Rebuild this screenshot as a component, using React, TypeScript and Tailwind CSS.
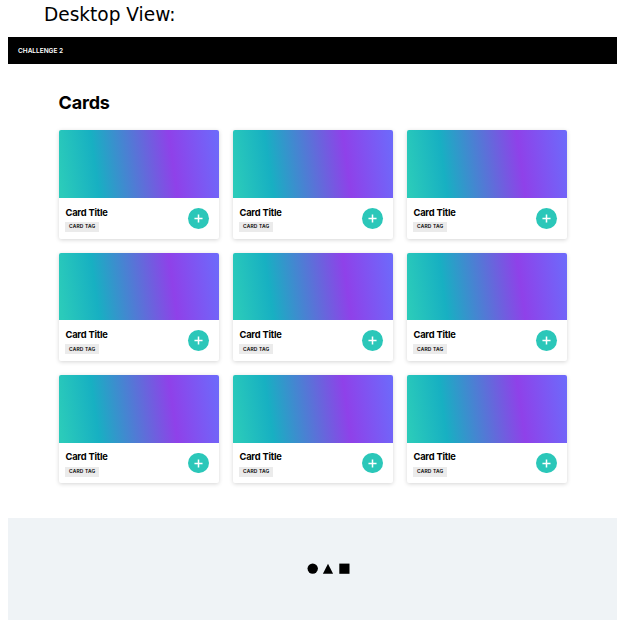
const cards = Array.from({ length: 9 }, (_, i) => i);

function Card() {
  return (
    <article className="h-[108.3px] overflow-hidden rounded-[2px] bg-white shadow-[0_1px_4px_rgba(0,0,0,0.17)]">
      <div className="h-[67.7px] bg-[linear-gradient(82deg,#2bcbba_2%,#17b0c2_24%,#8f41e9_70%,#6c6bfb_100%)]" />
      <div className="flex items-start justify-between pl-[6.9px] pr-[10px]">
        <div className="pt-[8.4px]">
          <h2 className="whitespace-nowrap text-[9.3px] font-bold leading-[12px] tracking-[-0.2px] text-black">
            Card Title
          </h2>
          <span className="mt-[3.6px] flex h-[10px] w-[34px] items-center justify-center whitespace-nowrap bg-[#ebebeb] pr-[0.5px] text-[4.9px] font-semibold tracking-[0.2px] text-black">
            CARD TAG
          </span>
        </div>
        <button
          aria-label="Add card"
          className="mt-[10px] flex size-[20.5px] items-center justify-center rounded-full bg-[#2bc7b9]"
        >
          <svg viewBox="0 0 10 10" className="size-[9px]" stroke="white" strokeWidth="1.7">
            <path d="M5 .5v9M.5 5h9" />
          </svg>
        </button>
      </div>
    </article>
  );
}

export default function App() {
  return (
    <div className="h-[629px] w-[624px] overflow-hidden bg-white px-2 font-['Inter',sans-serif] text-black">
      <p className="h-[37px] pl-[36px] pt-[3px] font-['DejaVu_Sans',sans-serif] text-[18.55px] leading-[23px]">
        Desktop View:
      </p>
      <div className="w-[609px]">
        <header className="flex h-[27.4px] items-center bg-black pl-[10px] pt-[2px] text-[6.5px] font-semibold text-white">
          CHALLENGE 2
        </header>
        <main className="h-[453.6px] pl-[50.6px] pt-[26.6px]">
          <h1 className="h-[39.5px] text-[18px] font-bold leading-[24px] tracking-[-0.2px]">Cards</h1>
          <div className="grid w-[508px] grid-cols-3 gap-[14px]">
            {cards.map((i) => (
              <Card key={i} />
            ))}
          </div>
        </main>
        <footer className="flex h-[102px] items-center justify-center bg-[#eff3f6] pl-[32px]">
          <svg viewBox="0 0 44 12" className="h-[12px] w-[44px]">
            <circle cx="5.7" cy="5.6" r="5.2" />
            <path d="M21 .8 26.1 10.7H15.9Z" />
            <path d="M32.3.6h10.2v10.2H32.3Z" />
          </svg>
        </footer>
      </div>
    </div>
  );
}
